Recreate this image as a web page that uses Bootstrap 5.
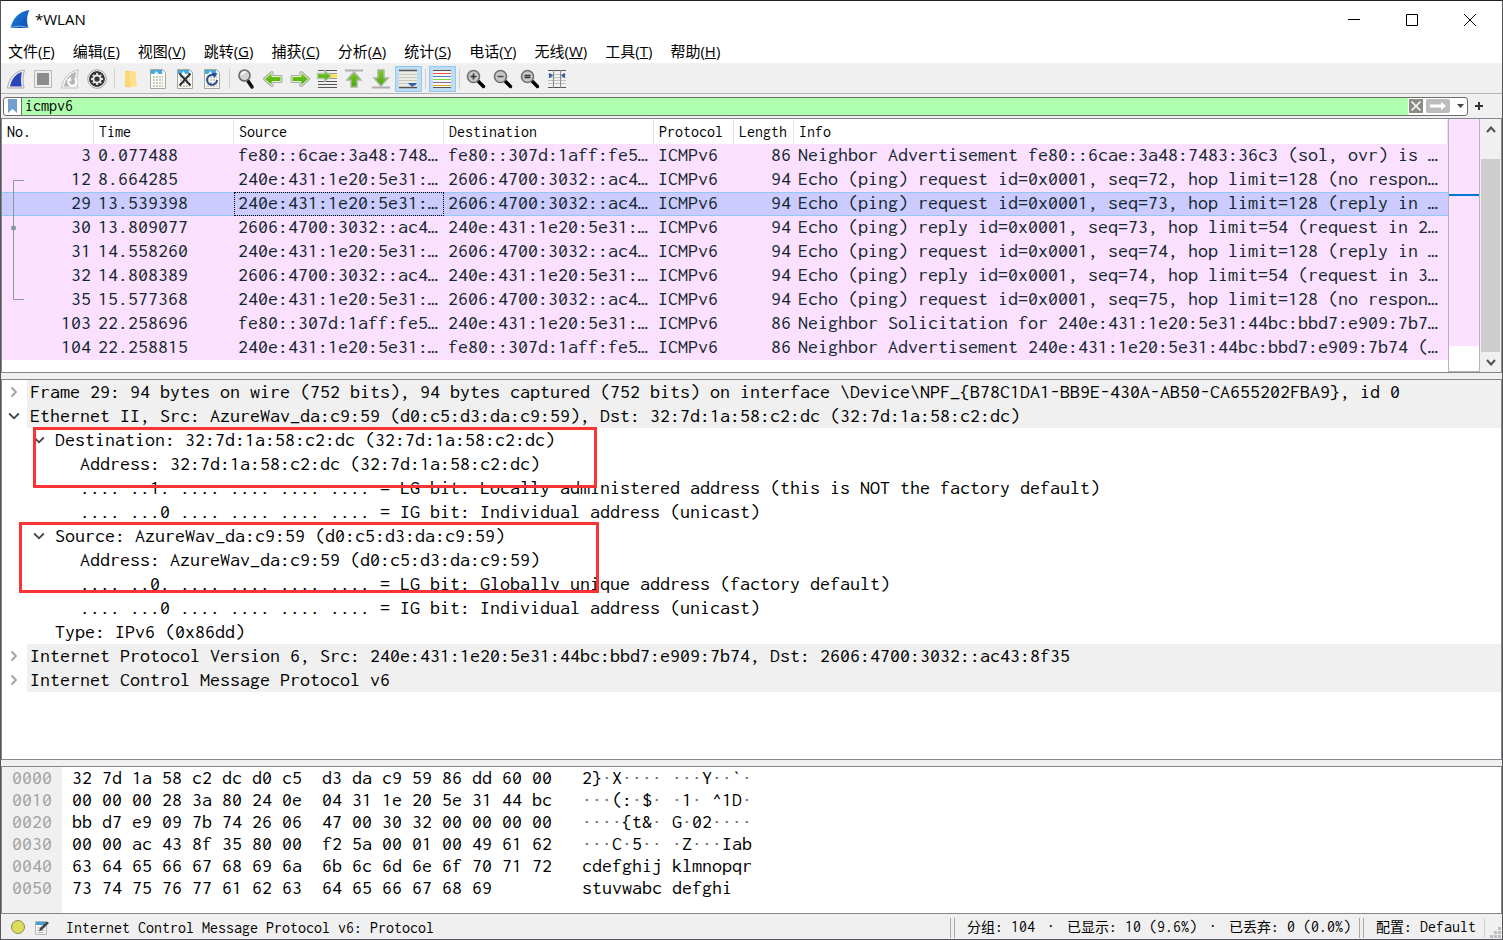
<!DOCTYPE html>
<html lang="zh-CN">
<head>
<meta charset="utf-8">
<meta name="viewport" content="width=device-width, initial-scale=1">
<title>*WLAN</title>
<link href="https://cdn.jsdelivr.net/npm/bootstrap@5.3.0/dist/css/bootstrap.min.css" rel="stylesheet">
<style>
  :root { --chrome: #f0f0f0; --line: #828790; --pink: #fce0ff; }
  body { font-family: "Noto Sans", "Noto Sans CJK SC", sans-serif; font-size: 15px; color: #000; background: #fff; }
  .app-window { min-height: 100vh; border: 1px solid #55555a; border-top-color: #222; background: var(--chrome); }
  button { border: 0; background: transparent; padding: 0; color: inherit; }
  svg { display: block; }

  .title-bar { height: 37px; background: #fff; }
  .title-text { font-family: "Open Sans", sans-serif; font-size: 15px; }
  .win-btn { width: 58px; height: 36px; }
  .menu-bar { height: 26px; background: #fff; gap: 18px; padding: 0 7px; border-bottom: 1px solid #f2f2f2; }
  .menu-bar a { color: #000; text-decoration: none; font-family: "Open Sans", "Noto Sans CJK SC", sans-serif; font-size: 15px; line-height: 24px; white-space: nowrap; }

  .tool-bar { height: 30px; padding: 0 2px; border-bottom: 1px solid #b4b4b4; }
  .tool-btn { width: 27px; height: 26px; border: 1px solid transparent; }
  .tool-btn.active { background: #c0dcf3; border-color: #90c8f6; }
  .tool-sep { width: 1px; height: 20px; background: #d0d0d0; margin: 0 3px; }

  .filter-bar { height: 24px; padding: 0 19px 0 2px; gap: 7px; }
  .filter-box { height: 19px; background: #fff; border: 1px solid #6e6e6e; border-radius: 3px; overflow: hidden; }
  .filter-mark { width: 18px; border-right: 1px solid #6e6e6e; }
  .filter-input { border: 0; outline: 0; background: #afffaf; padding: 0 3px; min-width: 0; }
  .filter-clear { padding: 0 3px 0 1px; }
  .filter-history { padding: 0 3px 0 7px; }
  .ui-mono, .filter-input { font-family: Inconsolata, "Noto Sans CJK SC", "Liberation Mono", monospace; font-size: 16px; line-height: 20px; }
  .data-mono { font-family: Inconsolata, "Noto Sans Mono CJK SC", "Liberation Mono", monospace; font-size: 20px; line-height: 24px; }

  .pane { background: #fff; border: 1px solid var(--line); }
  .pane + .pane { margin-top: 6px; }
  .packet-table { table-layout: fixed; border-collapse: separate; border-spacing: 0; }
  .packet-table th { height: 25px; padding: 0 4px 0 5px; font-weight: 400; border-right: 1px solid #e5e5e5; text-align: left; }
  .packet-table td { height: 24px; padding: 0 3px 2px 4px; line-height: 22px; background: var(--pink); color: #12272e; white-space: nowrap; overflow: hidden; }
  .packet-table td:nth-child(1), .packet-table td:nth-child(6) { text-align: right; }
  .packet-table tr.chosen td { background: #cbcbff; box-shadow: inset 0 1px #90c8f6, inset 0 -1px #90c8f6; }
  .packet-table td.focus-cell { outline: 1px dotted #000; outline-offset: -1px; }
  .packet-rows { padding-bottom: 12px; }
  .related { left: 11px; top: 60px; }
  .minimap { width: 32px; border: 1px solid #b4b4b4; border-top: 0; }
  .minimap-fill { background: var(--pink); margin-bottom: 25px; }
  .minimap-mark { height: 2px; background: #0078d7; margin-top: 75px; }
  .scroll-col { width: 21px; padding: 0 1px; background: var(--chrome); }
  .scroll-thumb { background: #cdcdcd; margin-top: 20px; }
  .scroll-btn { height: 20px; }

  .tree-row { height: 24px; white-space: pre; }
  .tree-label { padding-left: 3px; }
  .top-node .tree-label { background: var(--chrome); }
  .twist { width: 25px; padding-right: 2px; }
  .lvl-1 { padding-left: 25px; }
  .lvl-2 { padding-left: 50px; }
  .note-box { border: 3px solid #fa3434; }
  .note-dst { left: 31px; top: 47px; width: 564px; height: 61px; }
  .note-src { left: 17px; top: 142px; width: 580px; height: 71px; }

  .hex-pane pre { line-height: 22px; margin: 0; overflow: visible; padding: 0 0 14px; }
  .hex-pane .offsets { background: var(--chrome); color: #a0a0a0; width: 60px; padding-left: 10px; }
  .hex-pane .octets { padding-left: 10px; }
  .hex-pane .ascii { padding-left: 30px; }
  .hex-pane i { font-style: normal; color: #707070; }

  .status-bar { height: 25px; padding-top: 2px; white-space: pre; }
  .status-bar .han { font-size: 14px; }
  .status-counts { gap: 12px; }
  .grip-pair { width: 5px; height: 20px; border: solid #a8a8a8; border-width: 0 1px; }
</style>
</head>
<body>
<svg width="0" height="0" class="position-absolute" aria-hidden="true">
  <defs>
    <linearGradient id="fin" x1="0" y1="0" x2="1" y2="1"><stop offset="0" stop-color="#1a8ae0"/><stop offset="1" stop-color="#0a47b0"/></linearGradient>
    <linearGradient id="green" x1="0" y1="0" x2="0" y2="1"><stop offset="0" stop-color="#7ccc20"/><stop offset="1" stop-color="#46a808"/></linearGradient>
    <symbol id="sheet" viewBox="0 0 24 24"><path d="M4.500 2.500h12l3 3v16h-15z" fill="#fbfbf4" stroke="#a4a89c"/><path d="M5 3h11.500v4H5z" fill="#48a8e0"/><path d="M8 7l2.500-3 2 3zM16 3v3.500h3.500z" fill="#e8f4fa"/><path d="M7 10h10M7 13h10M7 16h10M7 19h10" stroke="#b9bdb0" stroke-width="1.500" stroke-dasharray="2 1"/></symbol>
    <symbol id="arrow" viewBox="0 0 24 24"><path d="M3.500 12l7.500-6.500v4h9v5h-9v4z" fill="#5cb510" stroke="#a9aba6" stroke-width="3" stroke-linejoin="round"/><path d="M3.500 12l7.500-6.500v4h9v5h-9v4z" fill="url(#green)" stroke="#e4f4d4" stroke-width="1"/></symbol>
    <symbol id="lens" viewBox="0 0 24 24"><path d="M14.500 14.500l5 5" stroke="#000" stroke-width="3.400" stroke-linecap="round"/><circle cx="9.500" cy="9.500" r="6" fill="#c8c8c8" stroke="#707070" stroke-width="1.600"/></symbol>
    <symbol id="chev-right" viewBox="0 0 12 12"><path d="M3.500 1.500L8 6l-4.500 4.500" fill="none" stroke="#a0a0a0" stroke-width="1.800"/></symbol>
    <symbol id="chev-down" viewBox="0 0 12 12"><path d="M1.200 3.500L6 8.300l4.800-4.800" fill="none" stroke="#404040" stroke-width="1.800"/></symbol>
  </defs>
</svg>

<div class="app-window d-flex flex-column">
  <header class="title-bar d-flex align-items-center">
    <svg class="ms-2" width="22" height="22" viewBox="0 0 22 22"><path d="M1.500 19C4 9 10 2.500 20.500 1 17.500 7 17.500 13 19.500 19z" fill="url(#fin)"/><path d="M1.500 18.500q9-3 18 0" fill="none" stroke="#8fb4d8"/></svg>
    <span class="title-text ms-1">*WLAN</span>
    <div class="ms-auto me-1 d-flex">
      <button class="win-btn" aria-label="Minimize"><svg class="ms-4" width="12" height="12"><path d="M0 5.500h12" stroke="#000"/></svg></button>
      <button class="win-btn" aria-label="Maximize"><svg class="ms-4" width="12" height="12"><path d="M.5.5h11v11H.5z" fill="none" stroke="#000"/></svg></button>
      <button class="win-btn" aria-label="Close"><svg class="ms-4" width="12" height="12"><path d="M0 0l12 12M12 0L0 12" stroke="#000"/></svg></button>
    </div>
  </header>

  <nav class="menu-bar d-flex align-items-center">
    <a href="#">文件(<u>F</u>)</a><a href="#">编辑(<u>E</u>)</a><a href="#">视图(<u>V</u>)</a><a href="#">跳转(<u>G</u>)</a><a href="#">捕获(<u>C</u>)</a><a href="#">分析(<u>A</u>)</a><a href="#">统计(<u>S</u>)</a><a href="#">电话(<u>Y</u>)</a><a href="#">无线(<u>W</u>)</a><a href="#">工具(<u>T</u>)</a><a href="#">帮助(<u>H</u>)</a>
  </nav>

  <div class="tool-bar d-flex align-items-center" role="toolbar">
    <button class="tool-btn" aria-label="Start capture"><svg width="24" height="24" viewBox="0 0 24 24"><path d="M3.500 21C5 11 11 4 20.500 3c-2 6-2 12-.5 18z" fill="#f4f4f4" stroke="#a8a8a8"/><path d="M6 19.500C7.500 12 12 6.500 18 5c-1.200 5-1.200 10-.2 14.500z" fill="#2a45b8"/></svg></button>
    <button class="tool-btn" aria-label="Stop capture"><svg width="24" height="24" viewBox="0 0 24 24"><path d="M3.500 3.500h17v17h-17z" fill="#eee" stroke="#b8b8b8"/><path d="M6 6h12v12H6z" fill="#8c8c8c"/></svg></button>
    <button class="tool-btn" aria-label="Restart capture"><svg width="24" height="24" viewBox="0 0 24 24"><path d="M3.500 21C5 11 11 4 20.500 3c-2 6-2 12-.5 18z" fill="#f4f4f4" stroke="#c4c4c4"/><path d="M6 19.500C7.500 12 12 6.500 18 5c-1.200 5-1.200 10-.2 14.500z" fill="#b4b4b4"/><path d="M16.500 11.500a4 4 0 1 1-5.500 1" fill="none" stroke="#fff" stroke-width="2"/><path d="M9 13l4-3.500.5 4.500z" fill="#fff"/></svg></button>
    <button class="tool-btn" aria-label="Capture options"><svg width="24" height="24" viewBox="0 0 24 24"><circle cx="12" cy="12" r="9.300" fill="#f2f2f2" stroke="#a4a4a4"/><circle cx="12" cy="12" r="7.600" fill="#33363a"/><circle cx="12" cy="12" r="4.600" fill="#e8e8e8"/><path d="M12 6v12M6 12h12M7.800 7.800l8.400 8.400M16.200 7.800l-8.400 8.400" stroke="#e8e8e8" stroke-width="1.800"/><circle cx="12" cy="12" r="7" fill="none" stroke="#33363a" stroke-width="1.600"/><circle cx="12" cy="12" r="2.600" fill="#33363a"/></svg></button>
    <span class="tool-sep"></span>
    <button class="tool-btn" aria-label="Open"><svg width="24" height="24" viewBox="0 0 24 24"><path d="M6 4h6v16H6z" fill="#f5c95a"/><path d="M9 4.500h8v12h1v3H9z" fill="#ffe08c"/><path d="M6 4l5 2v15l-5-2z" fill="#fbd874"/></svg></button>
    <button class="tool-btn" aria-label="Save"><svg width="24" height="24"><use href="#sheet"/></svg></button>
    <button class="tool-btn" aria-label="Close file"><svg width="24" height="24"><use href="#sheet"/><path d="M6.500 6.500l11 12M17.500 6.500l-11 12" stroke="#2c3036" stroke-width="2"/></svg></button>
    <button class="tool-btn" aria-label="Reload"><svg width="24" height="24"><use href="#sheet"/><path d="M14.500 8.500A5 5 0 1 0 17 13" fill="none" stroke="#2a4c90" stroke-width="2"/><path d="M12 5.500l5.500 1-3 4.500z" fill="#2a4c90"/></svg></button>
    <span class="tool-sep"></span>
    <button class="tool-btn" aria-label="Find"><svg width="24" height="24"><path d="M14 14l4 6" stroke="#111" stroke-width="3.500" stroke-linecap="round"/><circle cx="10.500" cy="8.500" r="5.500" fill="#d4d4d4" stroke="#6a6a6a" stroke-width="1.600"/><path d="M7.500 8a3 3 0 0 1 4-2.500" stroke="#fff" stroke-width="1.500" fill="none"/></svg></button>
    <button class="tool-btn" aria-label="Previous packet"><svg width="24" height="24"><use href="#arrow"/></svg></button>
    <button class="tool-btn" aria-label="Next packet"><svg width="24" height="24"><use href="#arrow" transform="matrix(-1 0 0 1 24 0)"/></svg></button>
    <button class="tool-btn" aria-label="Go to packet"><svg width="24" height="24"><path d="M3 3.500h19M3 14.500h19M3 17.500h19M3 20.500h19" stroke="#555"/><path d="M12 6.500h10M12 11.500h10" stroke="#999"/><path d="M15 7.500h7v3h-7z" fill="#ffe23c"/><path d="M2.500 6.500h7v-3l6.500 5.500-6.500 5.500v-3h-7z" fill="url(#green)" stroke="#b4c8a8" stroke-width="1.300"/></svg></button>
    <button class="tool-btn" aria-label="First packet"><svg width="24" height="24"><path d="M3 3.500h18" stroke="#b0b0b0" stroke-width="2"/><path d="M12 5l7 8h-4v7H9v-7H5z" fill="url(#green)" stroke="#a9b5a2" stroke-width="1.500"/></svg></button>
    <button class="tool-btn" aria-label="Last packet"><svg width="24" height="24"><path d="M3 20.500h18" stroke="#b0b0b0" stroke-width="2"/><path d="M12 19l7-8h-4V3H9v8H5z" fill="url(#green)" stroke="#a9b5a2" stroke-width="1.500"/></svg></button>
    <button class="tool-btn active" aria-label="Auto scroll"><svg width="24" height="24"><path d="M3 3h18v18H3z" fill="#eceee6"/><path d="M3 3.500h18M3 20.500h18" stroke="#555" stroke-width="1.500"/><path d="M3 7.500h18M3 10.500h18M3 13.500h18M3 16.500h18" stroke="#c4c8bc"/><path d="M12 16h9l-2 2.500h-1.500l-1 1.500-1.500-1.500H14z" fill="#2f5fa8"/></svg></button>
    <span class="tool-sep"></span>
    <button class="tool-btn active" aria-label="Colorize"><svg width="24" height="24"><path d="M3 3h18v18H3z" fill="#f8f8f4"/><path d="M3 3.500h18M3 20.500h18" stroke="#555"/><path d="M3 6.500h18" stroke="#f05050"/><path d="M3 9.500h18" stroke="#4a7cc8"/><path d="M3 12.500h18" stroke="#7cd840"/><path d="M3 15.500h18" stroke="#8866a0"/><path d="M3 18.500h18" stroke="#d8a820"/></svg></button>
    <span class="tool-sep"></span>
    <button class="tool-btn" aria-label="Zoom in"><svg width="24" height="24"><use href="#lens"/><path d="M6.500 9.500h6M9.500 6.500v6" stroke="#333" stroke-width="1.600"/></svg></button>
    <button class="tool-btn" aria-label="Zoom out"><svg width="24" height="24"><use href="#lens"/><path d="M6.500 9.500h6" stroke="#444" stroke-width="1.500"/></svg></button>
    <button class="tool-btn" aria-label="Normal size"><svg width="24" height="24"><use href="#lens"/><path d="M6.500 8.500h6M6.500 10.500h6" stroke="#333" stroke-width="1.500"/></svg></button>
    <button class="tool-btn" aria-label="Resize columns"><svg width="24" height="24"><path d="M3 3.500h18M3 20.500h18" stroke="#555"/><path d="M3 7.500h18M3 10.500h18M3 13.500h18M3 16.500h18" stroke="#c0c4b8"/><path d="M8.500 3v18M15.500 3v18" stroke="#888"/><path d="M4.500 6.500L7.500 8.500l-3 2zM19.500 6.500l-3 2 3 2z" fill="#2f5fa8" stroke="#2f5fa8"/></svg></button>
  </div>

  <div class="filter-bar d-flex align-items-center">
    <div class="filter-box d-flex flex-fill">
      <button class="filter-mark flex-shrink-0" aria-label="Bookmarks"><svg class="m-auto" width="9" height="14"><path d="M0 0h9v14l-4.500-4L0 14z" fill="#729fcf"/></svg></button>
      <input class="filter-input flex-fill" value="icmpv6" aria-label="Display filter">
      <button class="filter-clear" aria-label="Clear"><svg width="14" height="14"><path d="M0 0h14v14H0z" fill="#8a8c88"/><path d="M2.500 2.500l9 9M11.500 2.500l-9 9" stroke="#fff" stroke-width="1.500"/></svg></button>
      <button aria-label="Apply"><svg width="24" height="14"><rect width="24" height="14" rx="2" fill="#bcbcbc"/><path d="M4 5.500h11V3l5 4-5 4V8.500H4z" fill="#fff"/></svg></button>
      <button class="filter-history" aria-label="History"><svg width="7" height="4"><path d="M0 0h7L3.500 4z" fill="#444"/></svg></button>
    </div>
    <button aria-label="Add filter button"><svg width="8" height="8"><path d="M4 0v8M0 4h8" stroke="#333" stroke-width="2"/></svg></button>
  </div>

  <section class="pane d-flex">
    <div class="packet-rows flex-fill position-relative">
      <table class="packet-table w-100 data-mono">
        <colgroup><col style="width:92px"><col style="width:140px"><col style="width:210px"><col style="width:210px"><col style="width:80px"><col style="width:60px"><col></colgroup>
        <thead><tr class="ui-mono"><th>No.</th><th>Time</th><th>Source</th><th>Destination</th><th>Protocol</th><th>Length</th><th>Info</th></tr></thead>
        <tbody>
          <tr><td>3</td><td>0.077488</td><td>fe80::6cae:3a48:748…</td><td>fe80::307d:1aff:fe5…</td><td>ICMPv6</td><td>86</td><td>Neighbor Advertisement fe80::6cae:3a48:7483:36c3 (sol, ovr) is …</td></tr>
          <tr><td>12</td><td>8.664285</td><td>240e:431:1e20:5e31:…</td><td>2606:4700:3032::ac4…</td><td>ICMPv6</td><td>94</td><td>Echo (ping) request id=0x0001, seq=72, hop limit=128 (no respon…</td></tr>
          <tr class="chosen"><td>29</td><td>13.539398</td><td class="focus-cell">240e:431:1e20:5e31:…</td><td>2606:4700:3032::ac4…</td><td>ICMPv6</td><td>94</td><td>Echo (ping) request id=0x0001, seq=73, hop limit=128 (reply in …</td></tr>
          <tr><td>30</td><td>13.809077</td><td>2606:4700:3032::ac4…</td><td>240e:431:1e20:5e31:…</td><td>ICMPv6</td><td>94</td><td>Echo (ping) reply id=0x0001, seq=73, hop limit=54 (request in 2…</td></tr>
          <tr><td>31</td><td>14.558260</td><td>240e:431:1e20:5e31:…</td><td>2606:4700:3032::ac4…</td><td>ICMPv6</td><td>94</td><td>Echo (ping) request id=0x0001, seq=74, hop limit=128 (reply in …</td></tr>
          <tr><td>32</td><td>14.808389</td><td>2606:4700:3032::ac4…</td><td>240e:431:1e20:5e31:…</td><td>ICMPv6</td><td>94</td><td>Echo (ping) reply id=0x0001, seq=74, hop limit=54 (request in 3…</td></tr>
          <tr><td>35</td><td>15.577368</td><td>240e:431:1e20:5e31:…</td><td>2606:4700:3032::ac4…</td><td>ICMPv6</td><td>94</td><td>Echo (ping) request id=0x0001, seq=75, hop limit=128 (no respon…</td></tr>
          <tr><td>103</td><td>22.258696</td><td>fe80::307d:1aff:fe5…</td><td>240e:431:1e20:5e31:…</td><td>ICMPv6</td><td>86</td><td>Neighbor Solicitation for 240e:431:1e20:5e31:44bc:bbd7:e909:7b7…</td></tr>
          <tr><td>104</td><td>22.258815</td><td>240e:431:1e20:5e31:…</td><td>fe80::307d:1aff:fe5…</td><td>ICMPv6</td><td>86</td><td>Neighbor Advertisement 240e:431:1e20:5e31:44bc:bbd7:e909:7b74 (…</td></tr>
        </tbody>
      </table>
      <svg class="related position-absolute overflow-visible" width="12" height="123"><path d="M11 1.500H.5v119H11" fill="none" stroke="#8c97a0"/><circle cx=".5" cy="49" r="2.500" fill="#8c97a0"/></svg>
    </div>
    <div class="minimap d-flex flex-column flex-shrink-0"><div class="minimap-fill flex-fill overflow-hidden"><div class="minimap-mark"></div></div></div>
    <div class="scroll-col d-flex flex-column flex-shrink-0">
      <button class="scroll-btn" aria-label="Scroll up"><svg class="m-auto" width="10" height="7"><path d="M1 6l4-4.500L9 6" fill="none" stroke="#505050" stroke-width="2"/></svg></button>
      <div class="scroll-thumb flex-fill"></div>
      <button class="scroll-btn" aria-label="Scroll down"><svg class="m-auto" width="10" height="7"><path d="M1 1l4 4.500L9 1" fill="none" stroke="#505050" stroke-width="2"/></svg></button>
    </div>
  </section>

  <section class="pane data-mono flex-fill position-relative">
    <div class="tree-row top-node d-flex"><button class="twist" aria-label="Expand"><svg class="m-auto" width="12" height="12"><use href="#chev-right"/></svg></button><span class="tree-label flex-fill">Frame 29: 94 bytes on wire (752 bits), 94 bytes captured (752 bits) on interface \Device\NPF_{B78C1DA1-BB9E-430A-AB50-CA655202FBA9}, id 0</span></div>
    <div class="tree-row top-node d-flex"><button class="twist" aria-label="Collapse"><svg class="m-auto" width="12" height="12"><use href="#chev-down"/></svg></button><span class="tree-label flex-fill">Ethernet II, Src: AzureWav_da:c9:59 (d0:c5:d3:da:c9:59), Dst: 32:7d:1a:58:c2:dc (32:7d:1a:58:c2:dc)</span></div>
    <div class="tree-row lvl-1 d-flex"><button class="twist" aria-label="Collapse"><svg class="m-auto" width="12" height="12"><use href="#chev-down"/></svg></button><span class="tree-label">Destination: 32:7d:1a:58:c2:dc (32:7d:1a:58:c2:dc)</span></div>
    <div class="tree-row lvl-2 d-flex"><span class="twist"></span><span class="tree-label">Address: 32:7d:1a:58:c2:dc (32:7d:1a:58:c2:dc)</span></div>
    <div class="tree-row lvl-2 d-flex"><span class="twist"></span><span class="tree-label">.... ..1. .... .... .... .... = LG bit: Locally administered address (this is NOT the factory default)</span></div>
    <div class="tree-row lvl-2 d-flex"><span class="twist"></span><span class="tree-label">.... ...0 .... .... .... .... = IG bit: Individual address (unicast)</span></div>
    <div class="tree-row lvl-1 d-flex"><button class="twist" aria-label="Collapse"><svg class="m-auto" width="12" height="12"><use href="#chev-down"/></svg></button><span class="tree-label">Source: AzureWav_da:c9:59 (d0:c5:d3:da:c9:59)</span></div>
    <div class="tree-row lvl-2 d-flex"><span class="twist"></span><span class="tree-label">Address: AzureWav_da:c9:59 (d0:c5:d3:da:c9:59)</span></div>
    <div class="tree-row lvl-2 d-flex"><span class="twist"></span><span class="tree-label">.... ..0. .... .... .... .... = LG bit: Globally unique address (factory default)</span></div>
    <div class="tree-row lvl-2 d-flex"><span class="twist"></span><span class="tree-label">.... ...0 .... .... .... .... = IG bit: Individual address (unicast)</span></div>
    <div class="tree-row lvl-1 d-flex"><span class="twist"></span><span class="tree-label">Type: IPv6 (0x86dd)</span></div>
    <div class="tree-row top-node d-flex"><button class="twist" aria-label="Expand"><svg class="m-auto" width="12" height="12"><use href="#chev-right"/></svg></button><span class="tree-label flex-fill">Internet Protocol Version 6, Src: 240e:431:1e20:5e31:44bc:bbd7:e909:7b74, Dst: 2606:4700:3032::ac43:8f35</span></div>
    <div class="tree-row top-node d-flex"><button class="twist" aria-label="Expand"><svg class="m-auto" width="12" height="12"><use href="#chev-right"/></svg></button><span class="tree-label flex-fill">Internet Control Message Protocol v6</span></div>
    <div class="note-box note-dst position-absolute"></div>
    <div class="note-box note-src position-absolute"></div>
  </section>

  <section class="pane hex-pane d-flex">
<pre class="offsets data-mono">0000
0010
0020
0030
0040
0050</pre>
<pre class="octets data-mono">32 7d 1a 58 c2 dc d0 c5  d3 da c9 59 86 dd 60 00
00 00 00 28 3a 80 24 0e  04 31 1e 20 5e 31 44 bc
bb d7 e9 09 7b 74 26 06  47 00 30 32 00 00 00 00
00 00 ac 43 8f 35 80 00  f2 5a 00 01 00 49 61 62
63 64 65 66 67 68 69 6a  6b 6c 6d 6e 6f 70 71 72
73 74 75 76 77 61 62 63  64 65 66 67 68 69</pre>
<pre class="ascii data-mono">2}<i>·</i>X<i>····</i> <i>···</i>Y<i>··</i>`<i>·</i>
<i>···</i>(:<i>·</i>$<i>·</i> <i>·</i>1<i>·</i> ^1D<i>·</i>
<i>····</i>{t&amp;<i>·</i> G<i>·</i>02<i>····</i>
<i>···</i>C<i>·</i>5<i>··</i> <i>·</i>Z<i>···</i>Iab
cdefghij klmnopqr
stuvwabc defghi</pre>
  </section>

  <footer class="status-bar ui-mono d-flex align-items-center">
    <button class="ms-2" aria-label="Expert information"><svg width="16" height="16"><circle cx="9" cy="7" r="6.500" fill="#dcdc5c" stroke="#8a8a50"/></svg></button>
    <button class="ms-2" aria-label="Edit comment"><svg width="17" height="16"><path d="M2.500 1.500h11v13h-11z" fill="#f4f6f4" stroke="#b4b8b4"/><path d="M3 2h10v3H3z" fill="#3f9fd8"/><path d="M4.500 8h6M4.500 10.500h7M4.500 12.500h6" stroke="#bbb"/><path d="M6 11l1-3 7-6.500 2 1.500-7 7z" fill="#444"/></svg></button>
    <span class="ms-3">Internet Control Message Protocol v6: Protocol</span>
    <span class="grip-pair ms-auto me-2"></span>
    <span class="status-counts ms-1 d-flex"><span><span class="han">分组</span>: 104</span><span>·</span><span><span class="han">已显示</span>: 10 (9.6%)</span><span>·</span><span><span class="han">已丢弃</span>: 0 (0.0%)</span></span>
    <span class="grip-pair ms-2 me-2"></span>
    <span class="ms-1 me-1"><span class="han">配置</span>: Default</span>
    <svg class="ms-1" width="18" height="20"><path d="M.5 0v20" stroke="#d0d0d0"/><path d="M14 9h3v3h-3zM10 13h3v3h-3zM14 13h3v3h-3zM6 17h3v3H6zM10 17h3v3h-3zM14 17h3v3h-3z" fill="#bdbdbd"/></svg>
  </footer>
</div>
<script src="https://cdn.jsdelivr.net/npm/bootstrap@5.3.0/dist/js/bootstrap.bundle.min.js"></script>
</body>
</html>
